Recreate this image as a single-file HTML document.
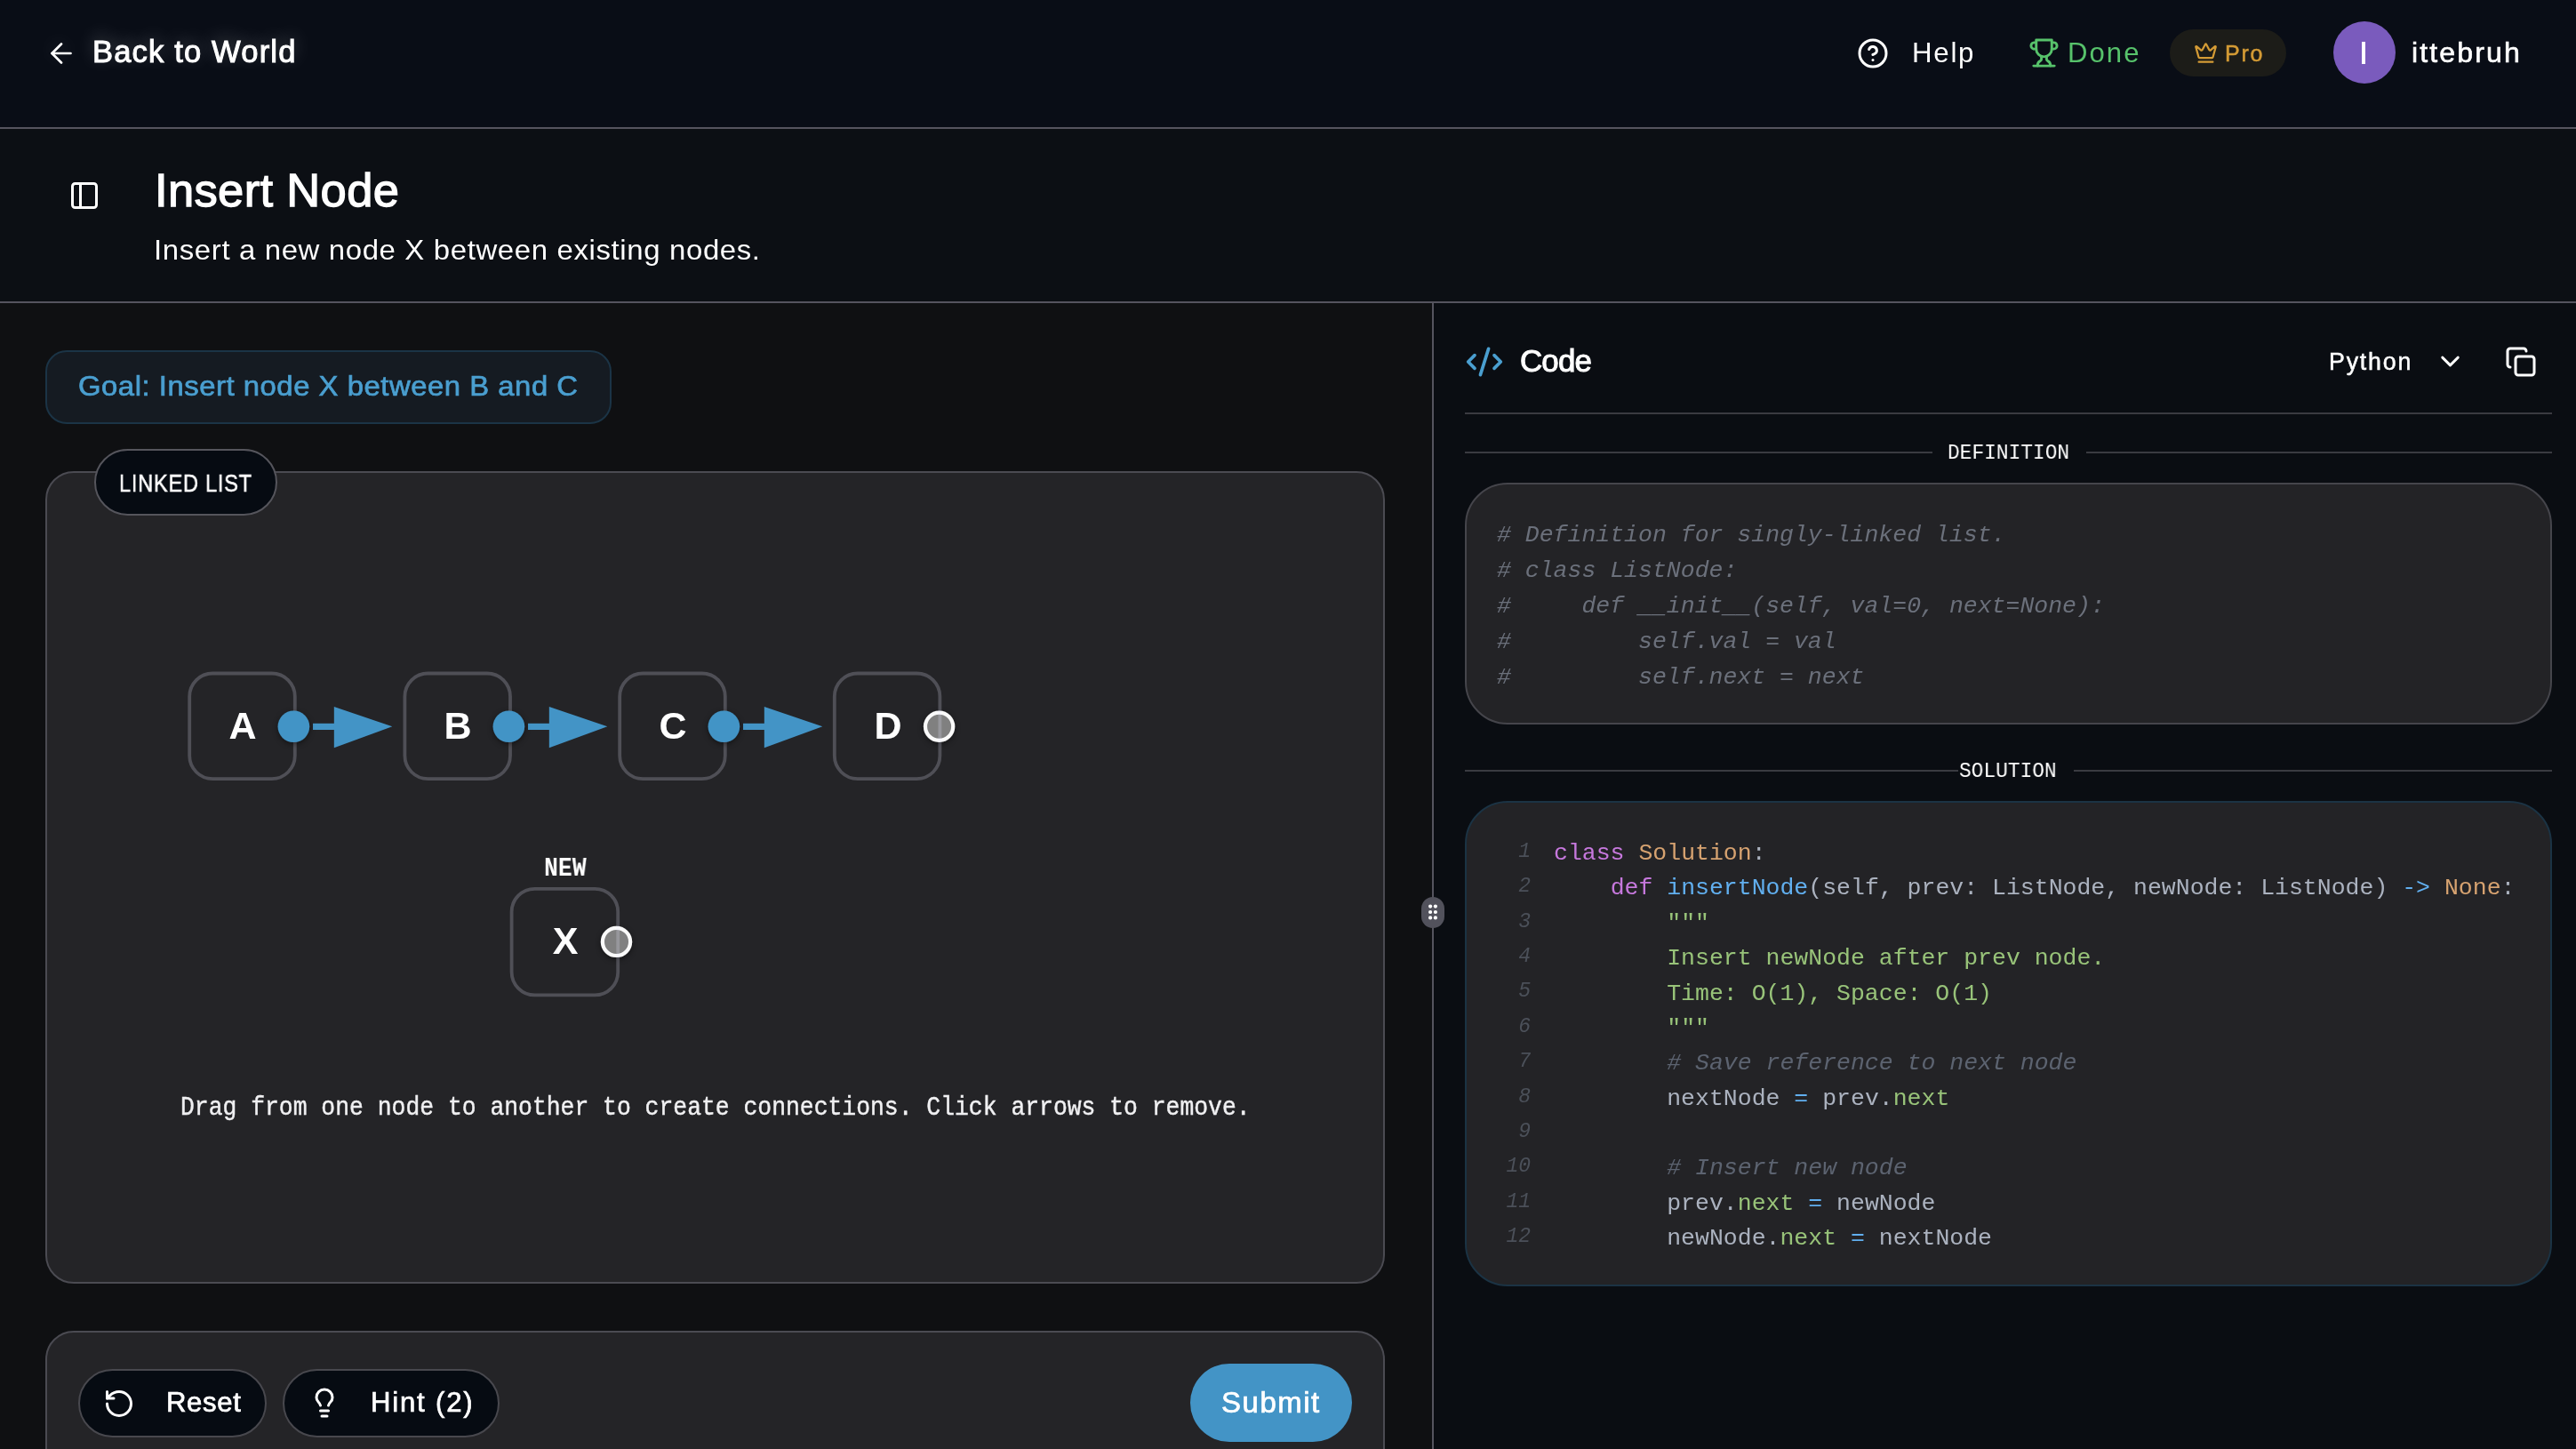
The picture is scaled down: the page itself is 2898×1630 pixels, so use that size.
<!DOCTYPE html>
<html><head><meta charset="utf-8">
<style>
*{margin:0;padding:0;box-sizing:border-box}
html,body{width:2898px;height:1630px;overflow:hidden;background:#0f1012}
body{position:relative;font-family:"Liberation Sans",sans-serif;color:#fff}
.a{position:absolute}
.t{position:absolute;line-height:1;white-space:nowrap;will-change:transform}
.mono{font-family:"Liberation Mono",monospace}
#hdr{left:0;top:0;width:2898px;height:143px;background:#090d16}
#hline{left:0;top:143px;width:2898px;height:2px;background:#55545e}
#ttl{left:0;top:145px;width:2898px;height:194px;background:#0c0f14}
#tline{left:0;top:339px;width:2898px;height:2px;background:#55545e}
#lp{left:0;top:341px;width:1611px;height:1289px;background:#0f1012}
#div{left:1611px;top:341px;width:2px;height:1289px;background:#55545e}
#rp{left:1613px;top:341px;width:1285px;height:1289px;background:#0a0d12}
svg{position:absolute;overflow:visible}
</style></head><body>
<div class="a" id="hdr"></div>

<div class="a" id="hline"></div>
<div class="a" id="ttl"></div>
<div class="a" id="tline"></div>
<div class="a" id="lp"></div>
<div class="a" id="div"></div>
<div class="a" id="rp"></div>

<!-- HEADER -->
<svg style="left:51px;top:42px;filter:drop-shadow(0 -4px 10px rgba(255,255,255,0.12))" width="36" height="36" viewBox="0 0 24 24" fill="none" stroke="#fff" stroke-width="1.8" stroke-linecap="round" stroke-linejoin="round"><path d="m12 19-7-7 7-7"/><path d="M19 12H5"/></svg>
<div class="t" id="back" style="text-shadow:0 -5px 20px rgba(255,255,255,0.3);left:103.5px;top:40.9px;font-size:34.6px;letter-spacing:1.15px;-webkit-text-stroke:1px currentColor">Back to World</div>

<svg style="left:2088.5px;top:41.5px" width="36" height="36" viewBox="0 0 24 24" fill="none" stroke="#fff" stroke-width="2" stroke-linecap="round" stroke-linejoin="round"><circle cx="12" cy="12" r="10"/><path d="M9.09 9a3 3 0 0 1 5.83 1c0 2-3 3-3 3"/><path d="M12 17h.01"/></svg>
<div class="t" id="help" style="left:2151px;top:43.9px;font-size:31.25px;letter-spacing:1.73px;">Help</div>

<svg style="left:2281.5px;top:41.7px" width="35" height="35" viewBox="0 0 24 24" fill="none" stroke="#57c26b" stroke-width="2" stroke-linecap="round" stroke-linejoin="round"><path d="M6 9H4.5a2.5 2.5 0 0 1 0-5H6"/><path d="M18 9h1.5a2.5 2.5 0 0 0 0-5H18"/><path d="M4 22h16"/><path d="M10 14.66V17c0 .55-.47.98-.97 1.21C7.85 18.75 7 20.24 7 22"/><path d="M14 14.66V17c0 .55.47.98.97 1.21C16.15 18.75 17 20.24 17 22"/><path d="M18 2H6v7a6 6 0 0 0 12 0V2Z"/></svg>
<div class="t" id="done" style="left:2325.9px;top:43.9px;font-size:31.1px;letter-spacing:2.03px;color:#57c26b">Done</div>

<div class="a" style="left:2441px;top:33px;width:131px;height:53px;border-radius:27px;background:#1c1c18"></div>
<svg style="left:2468px;top:46.3px" width="27" height="27" viewBox="0 0 24 24" fill="none" stroke="#d49b35" stroke-width="2" stroke-linecap="round" stroke-linejoin="round"><path d="M11.562 3.266a.5.5 0 0 1 .876 0L15.39 8.87a1 1 0 0 0 1.516.294L21.183 5.5a.5.5 0 0 1 .798.519l-2.834 10.246a1 1 0 0 1-.956.734H5.81a1 1 0 0 1-.957-.734L2.02 6.02a.5.5 0 0 1 .798-.519l4.276 3.664a1 1 0 0 0 1.516-.294z"/><path d="M5 21h14"/></svg>
<div class="t" id="pro" style="left:2503px;top:48px;font-size:25.0px;letter-spacing:1.8px;color:#d49b35;-webkit-text-stroke:0.5px currentColor">Pro</div>

<div class="a" style="left:2625px;top:24px;width:70px;height:70px;border-radius:50%;background:#7a5bbd"></div>
<div class="a" style="left:2657px;top:47px;width:4px;height:25px;background:#fff"></div>
<div class="t" id="user" style="left:2712.7px;top:43px;font-size:32.12px;letter-spacing:2.1px;-webkit-text-stroke:0.6px currentColor">ittebruh</div>

<!-- TITLE -->
<svg style="left:76.7px;top:201.8px" width="36" height="36" viewBox="0 0 24 24" fill="none" stroke="#fff" stroke-width="2" stroke-linecap="round" stroke-linejoin="round"><rect width="18" height="18" x="3" y="3" rx="2"/><path d="M9 3v18"/></svg>
<div class="t" id="title" style="left:173.5px;top:187.9px;font-size:52.5px;letter-spacing:0.35px;-webkit-text-stroke:1.3px currentColor">Insert Node</div>
<div class="t" id="sub" style="left:172.7px;top:266.3px;font-size:31.1px;letter-spacing:0.6px;transform:scaleX(1.059);transform-origin:0 0">Insert a new node X between existing nodes.</div>

<!-- LEFT PANEL -->
<div class="a" style="left:51px;top:394px;width:637px;height:83px;border-radius:24px;background:#151b22;border:2px solid #1b3446"></div>
<div class="t" id="goal" style="left:87.9px;top:419.9px;font-size:30.96px;letter-spacing:0.5px;color:#4a9fd0;-webkit-text-stroke:0.7px currentColor;transform:scaleX(1.061);transform-origin:0 0">Goal: Insert node X between B and C</div>

<div class="a" id="card" style="left:51px;top:530px;width:1507px;height:914px;border-radius:32px;background:#242427;border:2px solid #4b4b52"></div>
<div class="a" style="left:106px;top:505px;width:206px;height:75px;border-radius:38px;background:#060b12;border:2px solid #55555c"></div>
<div class="t" id="ll" style="left:134.4px;top:531px;font-size:26.89px;letter-spacing:0.8px;-webkit-text-stroke:0.5px currentColor;transform:scaleX(0.88);transform-origin:0 0">LINKED LIST</div>

<!-- nodes -->
<svg style="left:0;top:0" width="2898" height="1630">
  <defs>
    <filter id="sh" x="-50%" y="-50%" width="200%" height="200%"><feDropShadow dx="0" dy="2" stdDeviation="3" flood-color="#000" flood-opacity="0.45"/></filter>
  </defs>
  <g fill="#808080" stroke="#fafafa" stroke-width="4.2" filter="url(#sh)">
    <circle cx="1056.6" cy="817.3" r="15.6"/>
    <circle cx="693.5" cy="1059.4" r="15.6"/>
  </g>
  <g fill="none" stroke="rgba(230,230,255,0.22)" stroke-width="3.8">
    <rect x="213.2" y="757.5" width="118.6" height="118.6" rx="26"/>
    <rect x="455.4" y="757.5" width="118.6" height="118.6" rx="26"/>
    <rect x="697.2" y="757.5" width="118.6" height="118.6" rx="26"/>
    <rect x="938.8" y="757.5" width="118.6" height="118.6" rx="26"/>
    <rect x="575.6" y="999.8" width="119.6" height="119.6" rx="26"/>
  </g>
  <g fill="#4394c6">
    <rect x="352" y="813.8" width="26" height="7.2"/>
    <polygon points="375.8,794.9 441.3,817.3 375.8,841.2"/>
    <rect x="594" y="813.8" width="26" height="7.2"/>
    <polygon points="617.8,794.9 683.3,817.3 617.8,841.2"/>
    <rect x="836" y="813.8" width="26" height="7.2"/>
    <polygon points="859.8,794.9 925.3,817.3 859.8,841.2"/>
  </g>
  <g fill="#4394c6" filter="url(#sh)">
    <circle cx="330.4" cy="817.3" r="17.8"/>
    <circle cx="572.4" cy="817.3" r="17.8"/>
    <circle cx="814.4" cy="817.3" r="17.8"/>
  </g>
</svg>
<div class="t" style="left:212px;top:794.8px;width:122px;text-align:center;font-size:43px;font-weight:bold">A</div>
<div class="t" style="left:454px;top:794.8px;width:122px;text-align:center;font-size:43px;font-weight:bold">B</div>
<div class="t" style="left:696px;top:794.8px;width:122px;text-align:center;font-size:43px;font-weight:bold">C</div>
<div class="t" style="left:938px;top:794.8px;width:122px;text-align:center;font-size:43px;font-weight:bold">D</div>
<div class="t" style="left:575px;top:1036.8px;width:122px;text-align:center;font-size:43px;font-weight:bold">X</div>
<div class="t mono" id="new" style="left:611.6px;top:963.1px;font-size:29.74px;letter-spacing:0px;font-weight:bold;font-family:'Liberation Mono';transform:scaleX(0.89);transform-origin:0 0">NEW</div>

<div class="t mono" id="drag" style="left:202.6px;top:1233.9px;font-size:26.4px;color:#f0f0f2;-webkit-text-stroke:0.4px currentColor;transform:scaleY(1.1);transform-origin:0 20.2px">Drag from one node to another to create connections. Click arrows to remove.</div>

<div class="a" style="left:51px;top:1497px;width:1507px;height:300px;border-radius:32px;background:#242427;border:2px solid #4b4b52"></div>
<div class="a" style="left:88px;top:1540px;width:212px;height:77px;border-radius:39px;background:#060b12;border:2px solid #48484e"></div>
<svg style="left:116px;top:1561px" width="36" height="36" viewBox="0 0 24 24" fill="none" stroke="#fff" stroke-width="2" stroke-linecap="round" stroke-linejoin="round"><path d="M3 12a9 9 0 1 0 9-9 9.75 9.75 0 0 0-6.74 2.74L3 8"/><path d="M3 3v5h5"/></svg>
<div class="t" id="reset" style="left:186.8px;top:1562px;font-size:31.1px;letter-spacing:0.66px;-webkit-text-stroke:0.7px currentColor">Reset</div>
<div class="a" style="left:318px;top:1540px;width:244px;height:77px;border-radius:39px;background:#060b12;border:2px solid #48484e"></div>
<svg style="left:347px;top:1560px" width="36" height="36" viewBox="0 0 24 24" fill="none" stroke="#fff" stroke-width="2" stroke-linecap="round" stroke-linejoin="round"><path d="M15 14c.2-1 .7-1.7 1.5-2.5 1-.9 1.5-2.2 1.5-3.5A6 6 0 0 0 6 8c0 1 .2 2.2 1.5 3.5.7.7 1.3 1.5 1.5 2.5"/><path d="M9 18h6"/><path d="M10 22h4"/></svg>
<div class="t" id="hint" style="left:416.8px;top:1562px;font-size:31.1px;letter-spacing:1.81px;-webkit-text-stroke:0.7px currentColor">Hint (2)</div>
<div class="a" style="left:1339px;top:1534px;width:182px;height:88px;border-radius:44px;background:#4394c6"></div>
<div class="t" id="submit" style="left:1374.4px;top:1560.6px;font-size:32.99px;letter-spacing:1.52px;-webkit-text-stroke:0.7px currentColor">Submit</div>

<!-- RIGHT PANEL -->
<svg style="left:1648px;top:384.5px" width="44" height="44" viewBox="0 0 24 24" fill="none" stroke="#4a9fd0" stroke-width="2" stroke-linecap="round" stroke-linejoin="round"><path d="m18 16 4-4-4-4"/><path d="m6 8-4 4 4 4"/><path d="m14.5 4-5 16"/></svg>
<div class="t" id="code" style="left:1709.5px;top:388.5px;font-size:34.9px;letter-spacing:-0.83px;-webkit-text-stroke:1px currentColor">Code</div>
<div class="t" id="py" style="left:2619.9px;top:393.9px;font-size:26.74px;letter-spacing:1.82px;-webkit-text-stroke:0.5px currentColor">Python</div>
<svg style="left:2739px;top:388.5px" width="35" height="35" viewBox="0 0 24 24" fill="none" stroke="#fff" stroke-width="2" stroke-linecap="round" stroke-linejoin="round"><path d="m6 9 6 6 6-6"/></svg>
<svg style="left:2817.8px;top:389px" width="36" height="36" viewBox="0 0 24 24" fill="none" stroke="#fff" stroke-width="2" stroke-linecap="round" stroke-linejoin="round"><rect width="14" height="14" x="8" y="8" rx="2" ry="2"/><path d="M4 16c-1.1 0-2-.9-2-2V4c0-1.1.9-2 2-2h10c1.1 0 2 .9 2 2"/></svg>
<div class="a" style="left:1648px;top:464px;width:1223px;height:2px;background:#3a3b41"></div>

<div class="a" style="left:1648px;top:508px;width:526px;height:2px;background:#3a3b41"></div>
<div class="a" style="left:2347px;top:508px;width:524px;height:2px;background:#3a3b41"></div>
<div class="t mono" id="deflbl" style="left:2190.8px;top:498px;font-size:24.3px;transform:scaleX(0.94);transform-origin:0 0">DEFINITION</div>

<div class="a" style="left:1648px;top:543px;width:1223px;height:272px;border-radius:48px;background:#232326;border:2px solid #45454b"></div>
<pre class="a mono" id="defcode" style="left:1684px;top:582px;font-size:26.5px;line-height:40px;color:#6b707b;font-style:italic"># Definition for singly-linked list.
# class ListNode:
#     def __init__(self, val=0, next=None):
#         self.val = val
#         self.next = next</pre>

<div class="a" style="left:1648px;top:866px;width:555px;height:2px;background:#3a3b41"></div>
<div class="a" style="left:2333px;top:866px;width:538px;height:2px;background:#3a3b41"></div>
<div class="t mono" id="sollbl" style="left:2204.2px;top:856px;font-size:24.3px;transform:scaleX(0.94);transform-origin:0 0">SOLUTION</div>

<div class="a" style="left:1648px;top:901px;width:1223px;height:546px;border-radius:48px;background:#232326;border:2px solid #1b3344"></div>
<pre class="a mono" id="lnum" style="left:1690px;top:939px;width:32px;text-align:right;font-size:23px;line-height:39.36px;color:#4b5059;font-style:italic">1
2
3
4
5
6
7
8
9
10
11
12</pre>
<pre class="a mono" id="solcode" style="left:1748px;top:941px;font-size:26.5px;line-height:39.38px;color:#abb2bf"><span class="k">class</span> <span class="o">Solution</span>:
    <span class="k">def</span> <span class="f">insertNode</span>(self, prev: ListNode, newNode: ListNode) <span class="p">-&gt;</span> <span class="o">None</span>:
        <span class="g">"""</span>
<span class="g">        Insert newNode after prev node.</span>
<span class="g">        Time: O(1), Space: O(1)</span>
        <span class="g">"""</span>
        <span class="c"># Save reference to next node</span>
        nextNode <span class="p">=</span> prev.<span class="g">next</span>

        <span class="c"># Insert new node</span>
        prev.<span class="g">next</span> <span class="p">=</span> newNode
        newNode.<span class="g">next</span> <span class="p">=</span> nextNode</pre>
<style>
.k{color:#c678dd}.o{color:#d6a270}.f{color:#61afef}.g{color:#98c379}.p{color:#61afef}.c{color:#5c6370;font-style:italic}
pre{font-family:"Liberation Mono",monospace;will-change:transform}
</style>

<!-- divider handle -->
<div class="a" style="left:1599px;top:1009px;width:26px;height:35px;border-radius:13px;background:#52525c"></div>
<svg style="left:0;top:0" width="2898" height="1630"><g fill="#fff">
<circle cx="1609.1" cy="1019.6" r="2.1"/><circle cx="1614.9" cy="1019.6" r="2.1"/>
<circle cx="1609.1" cy="1026" r="2.1"/><circle cx="1614.9" cy="1026" r="2.1"/>
<circle cx="1609.1" cy="1032.4" r="2.1"/><circle cx="1614.9" cy="1032.4" r="2.1"/>
</g></svg>

</body></html>
